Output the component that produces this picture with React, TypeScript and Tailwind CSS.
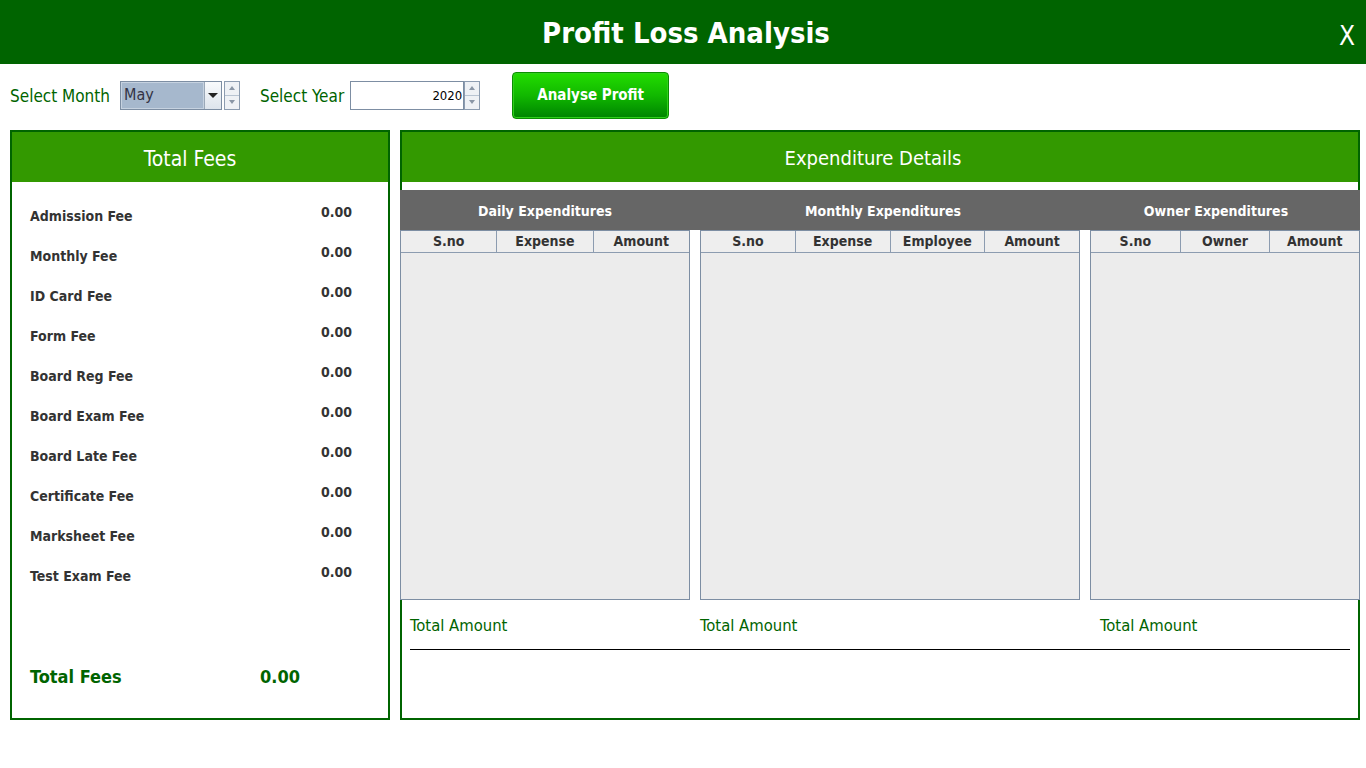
import React from "react";

const fees = [
  "Admission Fee",
  "Monthly Fee",
  "ID Card Fee",
  "Form Fee",
  "Board Reg Fee",
  "Board Exam Fee",
  "Board Late Fee",
  "Certificate Fee",
  "Marksheet Fee",
  "Test Exam Fee",
];

const tables = [
  { width: "w-[290px]", cols: ["S.no", "Expense", "Amount"] },
  { width: "w-[380px]", cols: ["S.no", "Expense", "Employee", "Amount"] },
  { width: "w-[270px]", cols: ["S.no", "Owner", "Amount"] },
];

function Spinner() {
  return (
    <div className="flex flex-col w-[16px] h-[29px] border border-[#8c9cb0] bg-[#eef1f5]">
      <div className="flex-1 flex items-center justify-center border-b border-[#b8c4d2]">
        <span className="w-0 h-0 border-x-[3px] border-x-transparent border-b-[4px] border-b-[#8a96a6]" />
      </div>
      <div className="flex-1 flex items-center justify-center">
        <span className="w-0 h-0 border-x-[3px] border-x-transparent border-t-[4px] border-t-[#8a96a6]" />
      </div>
    </div>
  );
}

function ExpTable({ width, cols }: { width: string; cols: string[] }) {
  return (
    <div className={`${width} h-[370px] flex flex-col border border-[#7d8ea3] bg-[#ececec]`}>
      <div className="flex h-[22px] bg-[#eeeeee] border-b border-[#8c9cb0]">
        {cols.map((c, i) => (
          <div
            key={c + i}
            className={`flex-1 flex items-center justify-center text-[14px] font-bold text-[#333333] ${
              i > 0 ? "border-l border-[#8c9cb0]" : ""
            }`}
          >
            {c}
          </div>
        ))}
      </div>
      <div className="flex-1" />
    </div>
  );
}

function App() {
  return (
    <div className="w-[1366px] h-[768px] bg-white overflow-hidden font-['DejaVu_Sans_Condensed','DejaVu_Sans',sans-serif]">
      <div className="relative h-[64px] bg-[#006400] flex items-center justify-center pt-[3px] pl-[6px]">
        <h1 className="text-[29px] font-bold text-white leading-none">Profit Loss Analysis</h1>
        <span className="absolute right-[11px] top-[23px] text-[26px] text-white leading-none">X</span>
      </div>

      <div className="h-[62px] flex items-center pl-[10px]">
        <span className="text-[17px] text-[#006400] mr-[10px] mt-[3px]">Select Month</span>
        <div className="flex h-[29px] w-[102px] border border-[#7d8ea3]">
          <div className="flex-1 bg-[#a6b8cd] border border-[#c6d2e0] flex items-center pl-[2px] text-[16px] text-[#333344]">
            May
          </div>
          <div className="w-[17px] bg-gradient-to-b from-[#f8fafc] to-[#dde4ec] border-l border-[#9aa8b8] flex items-center justify-center">
            <span className="w-0 h-0 border-x-[5px] border-x-transparent border-t-[5px] border-t-[#222222]" />
          </div>
        </div>
        <div className="ml-[2px]">
          <Spinner />
        </div>
        <span className="ml-[20px] text-[17px] text-[#006400] mr-[6px] mt-[3px]">Select Year</span>
        <div className="w-[114px] h-[29px] border border-[#7d8ea3] bg-white flex items-center justify-end pr-[1px] pt-[2px] text-[13px] text-black">
          2020
        </div>
        <Spinner />
        <button className="ml-[32px] w-[157px] h-[47px] rounded-[4px] border border-[#0a8f00] bg-gradient-to-b from-[#22dd00] via-[#11b800] to-[#008400] shadow-[inset_0_0_0_1px_#2fcf1a] text-white text-[15px] font-bold">
          Analyse Profit
        </button>
      </div>

      <div className="flex pl-[10px] mt-[4px]">
        <div className="w-[380px] h-[590px] border-2 border-[#006400] flex flex-col">
          <div className="h-[50px] bg-[#339900] flex items-center justify-center pr-[20px] pt-[5px] text-[21px] text-white">
            Total Fees
          </div>
          <div className="flex flex-col pt-[14px]">
            {fees.map((f) => (
              <div key={f} className="h-[40px] flex items-center justify-between pl-[18px] pr-[36px]">
                <span className="text-[14px] font-bold text-[#333333]">{f}</span>
                <span className="text-[14px] font-bold text-[#333333] mb-[8px]">0.00</span>
              </div>
            ))}
          </div>
          <div className="mt-auto mb-[30px] h-[24px] flex items-center pl-[18px]">
            <span className="w-[230px] text-[18px] font-bold text-[#006400]">Total Fees</span>
            <span className="text-[18px] font-bold text-[#006400]">0.00</span>
          </div>
        </div>

        <div className="ml-[10px] w-[960px] h-[590px] border-2 border-[#006400] flex flex-col">
          <div className="h-[50px] bg-[#339900] flex items-center justify-center pr-[14px] pt-[2px] text-[20px] text-white">
            Expenditure Details
          </div>
          <div className="-mx-[2px] mt-[8px] h-[40px] bg-[#666666] flex items-center pt-[2px] text-[14px] font-bold text-white">
            <div className="w-[290px] text-center">Daily Expenditures</div>
            <div className="w-[386px] text-center">Monthly Expenditures</div>
            <div className="w-[280px] text-center">Owner Expenditures</div>
          </div>
          <div className="-mx-[2px] flex gap-[10px]">
            {tables.map((t, i) => (
              <ExpTable key={i} width={t.width} cols={t.cols} />
            ))}
          </div>
          <div className="flex items-center h-[50px] pl-[8px] pt-[2px] text-[16.5px] text-[#006400]">
            <span className="w-[290px]">Total Amount</span>
            <span className="w-[400px]">Total Amount</span>
            <span>Total Amount</span>
          </div>
          <div className="mx-[8px] -mt-[1px] h-[1px] bg-black" />
        </div>
      </div>
    </div>
  );
}

export default App;
